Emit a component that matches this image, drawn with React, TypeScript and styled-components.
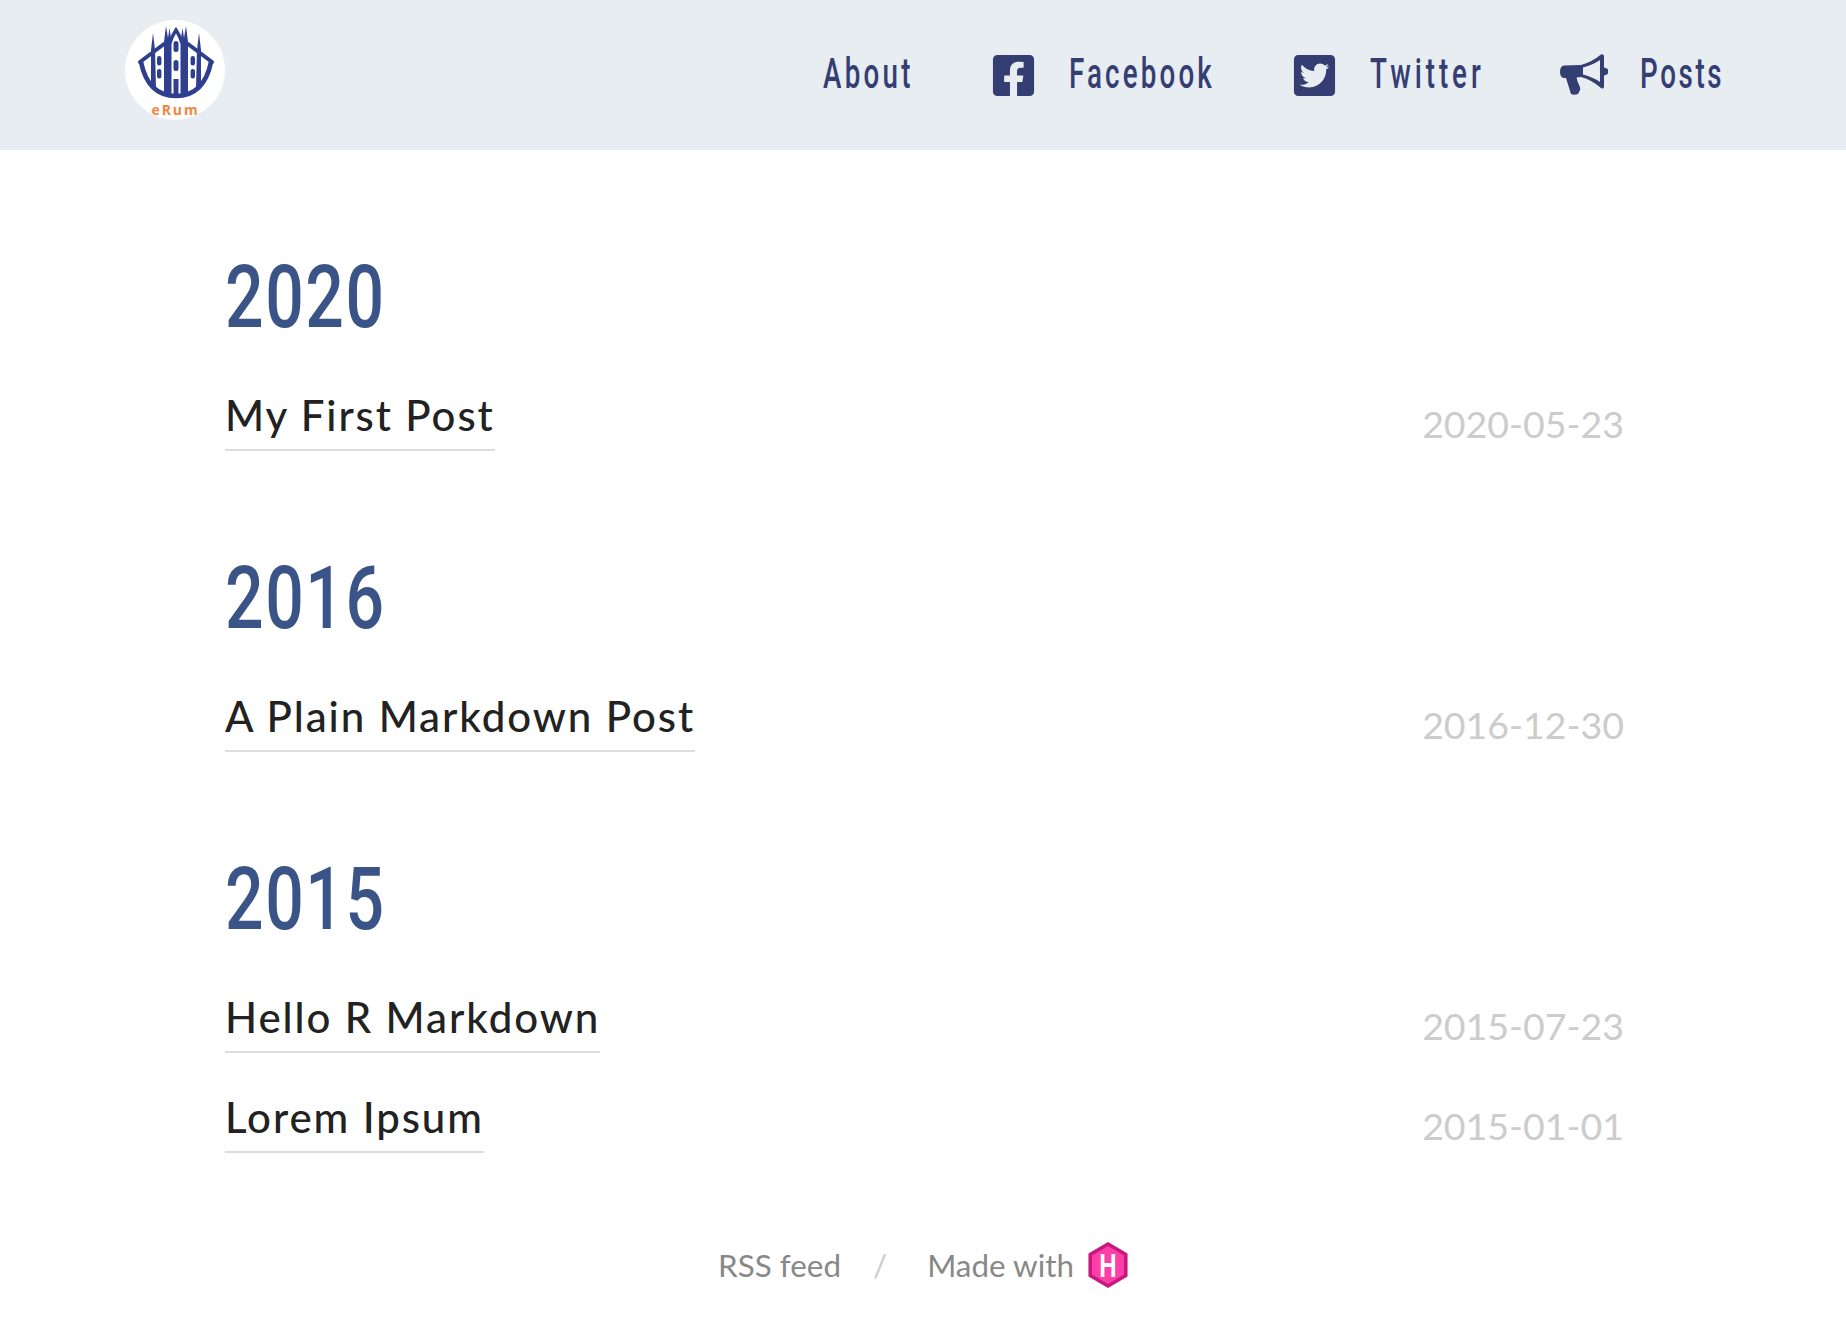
import React from 'react';
import styled, { createGlobalStyle } from 'styled-components';
import { FaFacebookSquare, FaTwitterSquare } from 'react-icons/fa';

const posts = [
  {
    year: '2020',
    items: [{ title: 'My First Post', date: '2020-05-23' }],
  },
  {
    year: '2016',
    items: [{ title: 'A Plain Markdown Post', date: '2016-12-30' }],
  },
  {
    year: '2015',
    items: [
      { title: 'Hello R Markdown', date: '2015-07-23' },
      { title: 'Lorem Ipsum', date: '2015-01-01' },
    ],
  },
];

function Logo() {
  return (
    <LogoBadge viewBox="0 0 100 100" role="img" aria-label="eRum">
      <circle cx="50" cy="50" r="50" fill="#fff" />
      <g fill="none" stroke="#2f3f8f" strokeWidth="4.6">
        <path d="M16 42 Q23 76 51 76 Q79 76 86 42" />
        <path d="M15 42 L39 24 M87 42 L63 24" strokeLinecap="round" strokeWidth="4" />
        <path d="M45 23 Q47 16 51 10 Q55 16 57 23" strokeWidth="3.4" />
      </g>
      <g fill="#2f3f8f">
        <polygon points="26,64 26,30 28,13 30,30 31,67" />
        <polygon points="76,64 76,30 74,13 72,30 71,67" />
        <polygon points="39,75 39,22 41,6 43,18 44.5,8 46.5,22 46.5,77" />
        <polygon points="63,75 63,22 61,6 59,18 57.5,8 55.5,22 55.5,77" />
        <rect x="48.5" y="21" width="5" height="11" rx="2.5" />
        <rect x="48.5" y="40" width="5" height="11" rx="2.5" />
        <rect x="48.5" y="59" width="5" height="18" />
        <rect x="32" y="36" width="4.4" height="9.5" rx="2.2" />
        <rect x="32" y="49" width="4.4" height="9.5" rx="2" />
        <rect x="65.6" y="36" width="4.4" height="9.5" rx="2.2" />
        <rect x="65.6" y="49" width="4.4" height="9.5" rx="2" />
      </g>
      <LogoText x="50.5" y="94.5" textAnchor="middle">
        eRum
      </LogoText>
    </LogoBadge>
  );
}

function Bullhorn() {
  return (
    <svg viewBox="10 9 48.5 43" width="48.5" height="43" fill="currentColor" aria-hidden="true">
      <path
        fillRule="evenodd"
        d="M14 21.5 L31 21 Q42 18 51 10.5 Q53.5 9.5 54 12 L54 23.5 Q58.5 24 58.5 27.5 Q58.5 31 54 31.5 L54 43 Q53.5 45.5 51 44 Q42 36 31 33 L26.5 33.5 Q27 37 29.5 42 Q31 45 29.5 47 L28 50 Q24 51.5 21 50 Q18.5 42 16 34 L14 34 Q10 33.5 10 28 Q10 22 14 21.5 Z M33 23.5 L33 30.5 Q43 33 50 38 L50 16 Q43 21 33 23.5 Z"
      />
    </svg>
  );
}

function HugoMark() {
  return (
    <HugoIcon viewBox="0 0 38 44" aria-label="Hugo">
      <polygon
        points="19,2 36,12 36,32 19,42 2,32 2,12"
        fill="#ff3fa8"
        stroke="#c9177e"
        strokeWidth="3.4"
      />
      <HugoLetter transform="translate(19 33.5) scale(0.72 1)" textAnchor="middle">
        H
      </HugoLetter>
    </HugoIcon>
  );
}

function App() {
  return (
    <>
      <GlobalStyle />
      <Header>
        <a href="#home" aria-label="Home">
          <Logo />
        </a>
        <Nav>
          <NavLink href="#about">
            <NavLabel $width={88} $spacing={5}>About</NavLabel>
          </NavLink>
          <NavLink href="#facebook">
            <SocialIcon as={FaFacebookSquare} size={47} />
            <NavLabel $width={143} $spacing={4.8}>Facebook</NavLabel>
          </NavLink>
          <NavLink href="#twitter">
            <SocialIcon as={FaTwitterSquare} size={47} />
            <NavLabel $width={111} $spacing={6}>Twitter</NavLabel>
          </NavLink>
          <NavLink href="#posts">
            <Bullhorn />
            <NavLabel $width={82} $spacing={4}>Posts</NavLabel>
          </NavLink>
        </Nav>
      </Header>
      <Main>
        {posts.map((group) => (
          <Section key={group.year}>
            <Year>{group.year}</Year>
            <List>
              {group.items.map((post) => (
                <Row key={post.title}>
                  <Title href="#post">{post.title}</Title>
                  <DateText>{post.date}</DateText>
                </Row>
              ))}
            </List>
          </Section>
        ))}
      </Main>
      <Footer>
        <FooterLink href="#rss">RSS feed</FooterLink>
        <Slash>/</Slash>
        <FooterLink href="#hugo">Made with</FooterLink>
        <HugoMark />
      </Footer>
    </>
  );
}

export default App;

const GlobalStyle = createGlobalStyle`
  body {
    margin: 0;
    background: #fff;
    font-family: Lato, "Liberation Sans", sans-serif;
  }

  a {
    text-decoration: none;
  }
`;

const Header = styled.header`
  display: flex;
  align-items: center;
  justify-content: space-between;
  height: 150px;
  padding: 0 124px 0 125px;
  background: #e8edf2;
`;

const LogoBadge = styled.svg`
  display: block;
  width: 100px;
  height: 100px;
  margin-top: -11px;
`;

const LogoText = styled.text`
  fill: #f5853a;
  font-family: "Open Sans", sans-serif;
  font-size: 14px;
  font-weight: 700;
  letter-spacing: 1.9px;
`;

const Nav = styled.nav`
  display: flex;
  align-items: center;
  gap: 79px;
  margin-top: -1px;
`;

const NavLink = styled.a`
  display: flex;
  align-items: center;
  gap: 32px;
  color: #343e72;
`;

const SocialIcon = styled.svg`
  margin-top: 2px;
`;

/* no condensed face is installed, so the regular one is squeezed to the label width */
const NavLabel = styled.span<{ $width: number; $spacing: number }>`
  display: block;
  width: ${(props) => props.$width}px;
  margin-top: -2px;
  font-family: Roboto, sans-serif;
  font-size: 42px;
  font-weight: 500;
  line-height: 50px;
  letter-spacing: ${(props) => props.$spacing}px;
  white-space: nowrap;
  transform: scaleX(0.66);
  transform-origin: left center;
`;

const Main = styled.main`
  display: flex;
  flex-direction: column;
  gap: 99px;
  padding: 99px 222px 0 225px;
`;

const Section = styled.section`
  display: flex;
  flex-direction: column;
`;

const Year = styled.h2`
  margin: 0 0 45px;
  color: #3b5488;
  font-family: Roboto, sans-serif;
  font-size: 87px;
  font-weight: 500;
  line-height: 96px;
  letter-spacing: 2px;
  transform: scaleX(0.78);
  transform-origin: left center;
`;

const List = styled.div`
  display: flex;
  flex-direction: column;
  gap: 39px;
`;

const Row = styled.div`
  display: flex;
  align-items: flex-end;
  justify-content: space-between;
`;

const Title = styled.a`
  padding-bottom: 9px;
  border-bottom: 2px solid #ddd;
  color: #222;
  font-size: 42px;
  font-weight: 500;
  line-height: 50px;
  letter-spacing: 1.9px;
`;

const DateText = styled.span`
  padding-bottom: 4px;
  color: #ccc;
  font-size: 37.5px;
  line-height: 46px;
`;

const Footer = styled.footer`
  display: flex;
  align-items: center;
  justify-content: center;
  margin-top: 89px;
  padding-bottom: 29px;
  color: #888;
  font-size: 31.4px;
  line-height: 46px;
`;

const FooterLink = styled.a`
  color: #888;
`;

const Slash = styled.span`
  margin: 0 40px 0 32px;
  color: #ccc;
`;

const HugoIcon = styled.svg`
  width: 40px;
  height: 46px;
  margin-left: 14px;
`;

const HugoLetter = styled.text`
  fill: #fff;
  font-family: "Liberation Sans", sans-serif;
  font-size: 32px;
  font-weight: 700;
`;
